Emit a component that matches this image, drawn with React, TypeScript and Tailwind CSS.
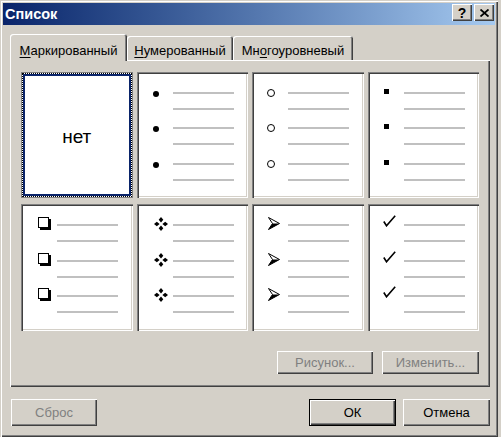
import React from "react";

type Kind = "disc" | "circle" | "square" | "box" | "diamonds" | "arrow" | "check";

const raised =
  "shadow-[inset_1px_1px_0_#ffffff,inset_-1px_-1px_0_#404040,inset_-2px_-2px_0_#808080]";
const sunken =
  "shadow-[inset_1px_1px_0_#808080,inset_2px_2px_0_#404040,inset_-1px_-1px_0_#ffffff,inset_-2px_-2px_0_#d4d0c8]";

function Bullet({ kind }: { kind: Kind }) {
  switch (kind) {
    case "disc":
      return <div className="ml-[16px] -mt-[1px] w-[6px] h-[6px] rounded-full bg-black" />;
    case "circle":
      return <div className="ml-[15px] -mt-[3px] w-[8px] h-[8px] rounded-full border border-black" />;
    case "square":
      return <div className="ml-[16px] -mt-[3px] w-[5px] h-[5px] bg-black" />;
    case "box":
      return (
        <div className="ml-[17px] -mt-[7px] w-[11px] h-[11px] border border-black shadow-[2px_2px_0_#000]" />
      );
    case "diamonds":
      return (
        <svg className="ml-[17px] -mt-[7px]" width="14" height="14" viewBox="0 0 14 14">
          <polygon points="7,0 9.3,2.8 7,5.6 4.7,2.8" fill="#000" />
          <polygon points="7,8.4 9.3,11.2 7,14 4.7,11.2" fill="#000" />
          <polygon points="0,7 2.8,4.7 5.6,7 2.8,9.3" fill="#000" />
          <polygon points="8.4,7 11.2,4.7 14,7 11.2,9.3" fill="#000" />
        </svg>
      );
    case "arrow":
      return (
        <svg className="ml-[16px] -mt-[7px]" width="12" height="13" viewBox="0 0 12 13">
          <polygon points="0.5,0.5 11.5,6.5 0.5,12.5 4.5,6.5" fill="#fff" stroke="#000" strokeWidth="1" />
          <polygon points="4.5,6.5 11.5,6.5 0.5,12.5" fill="#000" />
        </svg>
      );
    case "check":
      return (
        <svg className="ml-[15px] -mt-[9px]" width="13" height="12" viewBox="0 0 13 12">
          <path d="M0.8 6.5 L3.5 10.8 L12.2 0.8" fill="none" stroke="#000" strokeWidth="1.6" />
        </svg>
      );
  }
}

function ListCell({ kind }: { kind: Kind }) {
  return (
    <div className={`bg-white ${sunken} pt-[20px] flex flex-col`}>
      {[0, 1, 2].map((i) => (
        <div key={i} className="flex h-[36px]">
          <div className="w-[36px] shrink-0">
            <Bullet kind={kind} />
          </div>
          <div className="w-[61px]">
            <div className="h-[2px] bg-[#c0c0c0]" />
            <div className="h-[2px] mt-[14px] bg-[#c0c0c0]" />
          </div>
        </div>
      ))}
    </div>
  );
}

function NoneCell() {
  return (
    <div className="border border-[#808080] bg-white">
      <div className="h-full border border-dotted border-black">
        <div className="h-full border-2 border-[#0a246a] flex items-center justify-center pt-[4px] text-[19px] text-black">
          нет
        </div>
      </div>
    </div>
  );
}

function Button({
  label,
  w,
  h,
  disabled,
  isDefault,
}: {
  label: string;
  w: string;
  h: string;
  disabled?: boolean;
  isDefault?: boolean;
}) {
  const edge = isDefault
    ? "shadow-[inset_0_0_0_1px_#000000,inset_2px_2px_0_#ffffff,inset_-2px_-2px_0_#404040,inset_-3px_-3px_0_#808080]"
    : raised;
  return (
    <div
      className={`${w} ${h} ${edge} bg-[#d4d0c8] flex items-center justify-center text-[13px] ${
        disabled ? "text-[#808080]" : "text-black"
      }`}
    >
      {label}
    </div>
  );
}

export default function App() {
  const kinds: Kind[] = ["disc", "circle", "square", "box", "diamonds", "arrow", "check"];

  return (
    <div className="w-[501px] h-[437px] bg-[#d4d0c8] font-['Liberation_Sans',Arial,sans-serif]">
      <div className="w-[498px] h-[437px] p-[3px] flex flex-col bg-[#d4d0c8] shadow-[inset_1px_1px_0_#d4d0c8,inset_2px_2px_0_#ffffff,inset_-1px_-1px_0_#404040,inset_-2px_-2px_0_#808080]">
        {/* title bar */}
        <div className="h-[22px] flex items-start bg-linear-to-r from-[#0a246a] to-[#a6caf0] pr-[1px]">
          <span className="ml-[2px] leading-[22px] text-[14.5px] font-bold text-white">Список</span>
          <div className="ml-auto mt-[1px] flex gap-[2px]">
            <div className={`w-[20px] h-[17px] bg-[#d4d0c8] ${raised} flex items-center justify-center text-[14px] font-bold leading-none text-black`}>
              ?
            </div>
            <div className={`w-[20px] h-[17px] bg-[#d4d0c8] ${raised} flex items-center justify-center`}>
              <svg width="9" height="8" viewBox="0 0 9 8">
                <path d="M0.5 0.5 L8.5 7.5 M8.5 0.5 L0.5 7.5" stroke="#000" strokeWidth="1.8" />
              </svg>
            </div>
          </div>
        </div>

        {/* tabs */}
        <div className="mt-[9px] ml-[7px] h-[26px] flex items-end text-[13px] text-black">
          <div className="relative z-10 w-[117px] h-[27px] -mb-[1px] pt-[7px] text-center bg-[#d4d0c8] rounded-t-[3px] shadow-[inset_1px_1px_0_#ffffff,inset_-1px_0_0_#404040,inset_-2px_0_0_#808080]">
            <span className="underline underline-offset-[2px]">М</span>аркированный
          </div>
          <div className="w-[106px] h-[24px] pt-[5px] text-center rounded-t-[3px] shadow-[inset_1px_1px_0_#ffffff,inset_-1px_0_0_#404040,inset_-2px_0_0_#808080]">
            <span className="underline underline-offset-[2px]">Н</span>умерованный
          </div>
          <div className="w-[120px] h-[24px] pt-[5px] text-center rounded-t-[3px] shadow-[inset_1px_1px_0_#ffffff,inset_-1px_0_0_#404040,inset_-2px_0_0_#808080]">
            Мн<span className="underline underline-offset-[2px]">о</span>гоуровневый
          </div>
        </div>

        {/* tab panel */}
        <div className="ml-[7px] w-[480px] h-[327px] pt-[12px] pl-[11px] flex flex-col shadow-[inset_1px_1px_0_#ffffff,inset_-1px_-1px_0_#404040,inset_-2px_-2px_0_#808080]">
          <div className="w-[458px] grid grid-cols-4 grid-rows-[126px_127px] gap-x-[4px] gap-y-[6px]">
            <NoneCell />
            {kinds.map((k) => (
              <ListCell key={k} kind={k} />
            ))}
          </div>
          <div className="mt-[20px] pr-[11px] flex justify-end gap-[9px]">
            <Button label="Рисунок..." w="w-[96px]" h="h-[23px]" disabled />
            <Button label="Изменить..." w="w-[97px]" h="h-[23px]" disabled />
          </div>
        </div>

        {/* dialog buttons */}
        <div className="mt-[12px] flex">
          <div className="ml-[8px]">
            <Button label="Сброс" w="w-[86px]" h="h-[27px]" disabled />
          </div>
          <div className="ml-auto mr-[5px] flex gap-[7px]">
            <Button label="ОК" w="w-[87px]" h="h-[27px]" isDefault />
            <Button label="Отмена" w="w-[87px]" h="h-[27px]" />
          </div>
        </div>
      </div>
    </div>
  );
}
